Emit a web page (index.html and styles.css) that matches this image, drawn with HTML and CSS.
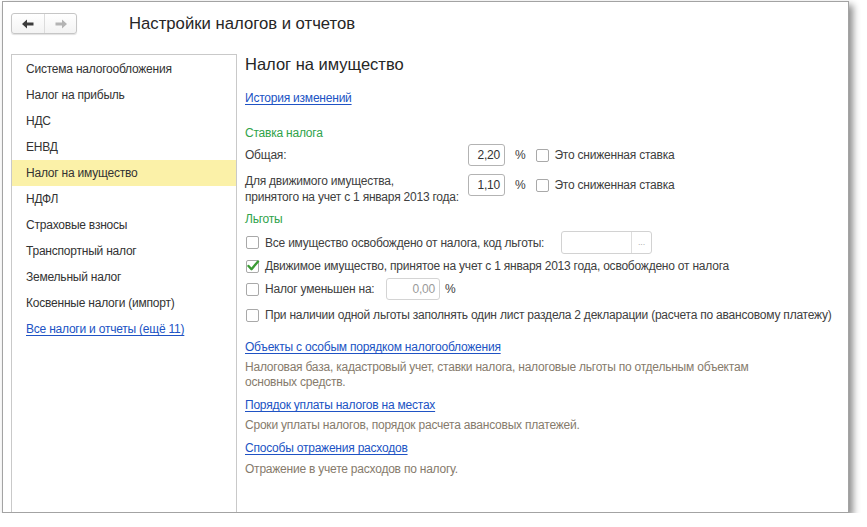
FILE: index.html
```html
<!DOCTYPE html>
<html lang="ru">
<head>
<meta charset="utf-8">
<title>Настройки налогов и отчетов</title>
<link rel="stylesheet" href="styles.css">
</head>
<body>
<div class="window">
  <div class="header">
    <div class="nav">
      <span class="nav-btn">
        <svg width="12" height="10" viewBox="0 0 12 10"><path d="M0 5 L5 0.5 L5 3.5 L11.5 3.5 L11.5 6.5 L5 6.5 L5 9.5 Z" fill="#3c3c3c"/></svg>
      </span>
      <span class="nav-btn">
        <svg width="12" height="10" viewBox="0 0 12 10"><path d="M12 5 L7 0.5 L7 3.5 L0.5 3.5 L0.5 6.5 L7 6.5 L7 9.5 Z" fill="#b4b4b4"/></svg>
      </span>
    </div>
    <h1 class="title">Настройки налогов и отчетов</h1>
  </div>
  <div class="body">
    <ul class="sidebar">
      <li class="side-item">Система налогообложения</li>
      <li class="side-item">Налог на прибыль</li>
      <li class="side-item">НДС</li>
      <li class="side-item">ЕНВД</li>
      <li class="side-item active">Налог на имущество</li>
      <li class="side-item">НДФЛ</li>
      <li class="side-item">Страховые взносы</li>
      <li class="side-item">Транспортный налог</li>
      <li class="side-item">Земельный налог</li>
      <li class="side-item">Косвенные налоги (импорт)</li>
      <li class="side-item"><a class="link" href="#">Все налоги и отчеты (ещё 11)</a></li>
    </ul>
    <div class="main">
      <h2 class="page-title">Налог на имущество</h2>
      <a class="link history" href="#">История изменений</a>

      <div class="group-title rate-title">Ставка налога</div>
      <div class="rate-row first">
        <div class="rate-label">Общая:</div>
        <div class="num-input">2,20</div>
        <div class="rate-opts"><span class="pct">%</span><span class="cb"></span><span class="cb-text">Это сниженная ставка</span></div>
      </div>
      <div class="rate-row second">
        <div class="rate-label">Для движимого имущества,<br>принятого на учет с 1 января 2013 года:</div>
        <div class="num-input">1,10</div>
        <div class="rate-opts"><span class="pct">%</span><span class="cb"></span><span class="cb-text">Это сниженная ставка</span></div>
      </div>

      <div class="group-title benefit-title">Льготы</div>
      <div class="check-row r1">
        <span class="cb"></span>
        <span class="check-label w1">Все имущество освобождено от налога, код льготы:</span>
        <div class="code-input"><span class="code-field"></span><span class="code-btn">...</span></div>
      </div>
      <div class="check-row r2">
        <span class="cb checked"><svg width="14" height="14" viewBox="0 0 14 14"><path d="M2.5 7 L5.5 10.2 L12 2.5" fill="none" stroke="#3b9b34" stroke-width="2.4" stroke-linecap="round" stroke-linejoin="round"/></svg></span>
        <span class="check-label">Движимое имущество, принятое на учет с 1 января 2013 года, освобождено от налога</span>
      </div>
      <div class="check-row r3">
        <span class="cb"></span>
        <span class="check-label w3">Налог уменьшен на:</span>
        <div class="num-input disabled">0,00</div>
        <span class="pct small">%</span>
      </div>
      <div class="check-row r4">
        <span class="cb"></span>
        <span class="check-label">При наличии одной льготы заполнять один лист раздела 2 декларации (расчета по авансовому платежу)</span>
      </div>

      <a class="link section-link l1" href="#">Объекты с особым порядком налогообложения</a>
      <div class="desc">Налоговая база, кадастровый учет, ставки налога, налоговые льготы по отдельным объектам<br>основных средств.</div>
      <a class="link section-link" href="#">Порядок уплаты налогов на местах</a>
      <div class="desc">Сроки уплаты налогов, порядок расчета авансовых платежей.</div>
      <a class="link section-link" href="#">Способы отражения расходов</a>
      <div class="desc last">Отражение в учете расходов по налогу.</div>
    </div>
  </div>
</div>
</body>
</html>
```
FILE: styles.css
```css
* { box-sizing: border-box; }
html, body { margin: 0; padding: 0; background: #ffffff; }
body {
  font-family: "Liberation Sans", Arial, sans-serif;
  font-size: 12px;
  letter-spacing: -0.22px;
  color: #404040;
}
.window {
  margin: 1px 0 0 2px;
  width: 847px;
  height: 512px;
  border: 1px solid #a3a3a3;
  background: #fff;
  box-shadow: 4px 4px 7px rgba(0, 0, 0, 0.45);
  display: flex;
  flex-direction: column;
}
.header {
  height: 52px;
  flex: none;
  padding: 11px 8px 0 8px;
  display: flex;
  align-items: flex-start;
}
.nav {
  display: flex;
  height: 21px;
  border: 1px solid #c6c6c6;
  border-radius: 3px;
  background: linear-gradient(#ffffff, #f3f3f3);
  box-shadow: 0 1px 1px rgba(0, 0, 0, 0.12);
}
.nav-btn {
  width: 32px;
  height: 19px;
  display: flex;
  align-items: center;
  justify-content: center;
}
.nav-btn + .nav-btn { border-left: 1px solid #dcdcdc; }
.title {
  margin: 0 0 0 52px;
  font-size: 16.7px;
  font-weight: normal;
  letter-spacing: 0;
  line-height: 21px;
  color: #262626;
}
.body {
  flex: 1;
  display: flex;
  min-height: 0;
}
.sidebar {
  list-style: none;
  margin: 0 0 0 8px;
  padding: 1px 0 0 0;
  width: 226px;
  flex: none;
  border: 1px solid #c9c9c9;
  border-bottom: none;
}
.side-item {
  height: 26px;
  line-height: 26px;
  padding-left: 14px;
  color: #333333;
  white-space: nowrap;
}
.side-item.active { background: #fbf1a8; }
.link {
  color: #2053c4;
  text-decoration: underline;
  text-underline-offset: 2px;
}
.main {
  flex: 1;
  padding-left: 8px;
  display: flex;
  flex-direction: column;
  align-items: flex-start;
}
.page-title {
  margin: 0;
  font-size: 16.5px;
  font-weight: normal;
  letter-spacing: 0;
  line-height: 20px;
  color: #262626;
}
.history { margin-top: 16px; line-height: 16px; }
.group-title { color: #2fa34a; line-height: 16px; }
.rate-title { margin-top: 19px; }
.benefit-title { margin-top: 6px; }
.rate-row { display: flex; align-items: flex-start; }
.rate-row.first { margin-top: 3px; }
.rate-row.second { margin-top: 7px; }
.rate-label { width: 223px; line-height: 16px; }
.rate-row.first .rate-label { line-height: 22px; }
.rate-row.second .num-input, .rate-row.second .rate-opts { margin-top: 1px; }
.num-input {
  width: 37px;
  height: 22px;
  border: 1px solid #b3b3b3;
  border-radius: 3px;
  text-align: right;
  padding-right: 4px;
  line-height: 20px;
  color: #333;
  background: #fff;
}
.num-input.disabled {
  width: 54px;
  color: #9a9a9a;
  border-color: #d4d4d4;
}
.rate-opts { display: flex; align-items: center; height: 22px; }
.pct { margin-left: 10px; color: #404040; }
.pct.small { margin-left: 5px; }
.cb {
  width: 13px;
  height: 13px;
  border: 1px solid #a9a9a9;
  border-radius: 2px;
  background: #fff;
  flex: none;
  position: relative;
}
.rate-opts .cb { margin-left: 11px; }
.cb-text { margin-left: 5px; }
.cb.checked svg { position: absolute; left: -1px; top: -2px; }
.check-row { display: flex; align-items: center; padding-left: 1px; }
.check-row .check-label { margin-left: 6px; white-space: nowrap; }
.check-row .w1 { width: 296px; }
.check-row .w3 { width: 121px; }
.r1 { margin-top: 4px; height: 23px; }
.r2 { margin-top: 4px; height: 16px; }
.r3 { margin-top: 4px; height: 22px; }
.r4 { margin-top: 7px; height: 16px; }
.code-input {
  display: flex;
  width: 91px;
  height: 23px;
  border: 1px solid #d2d2d2;
  border-radius: 3px;
}
.code-field { flex: 1; }
.code-btn {
  width: 20px;
  border-left: 1px solid #dddddd;
  color: #b0b0b0;
  font-size: 9px;
  text-align: center;
  line-height: 21px;
}
.section-link { line-height: 16px; margin-top: 7px; }
.section-link.l1 { margin-top: 16px; }
.desc {
  margin-top: 5px;
  line-height: 15px;
  color: #867b6c;
}
.desc.last { margin-top: 6px; }
```
